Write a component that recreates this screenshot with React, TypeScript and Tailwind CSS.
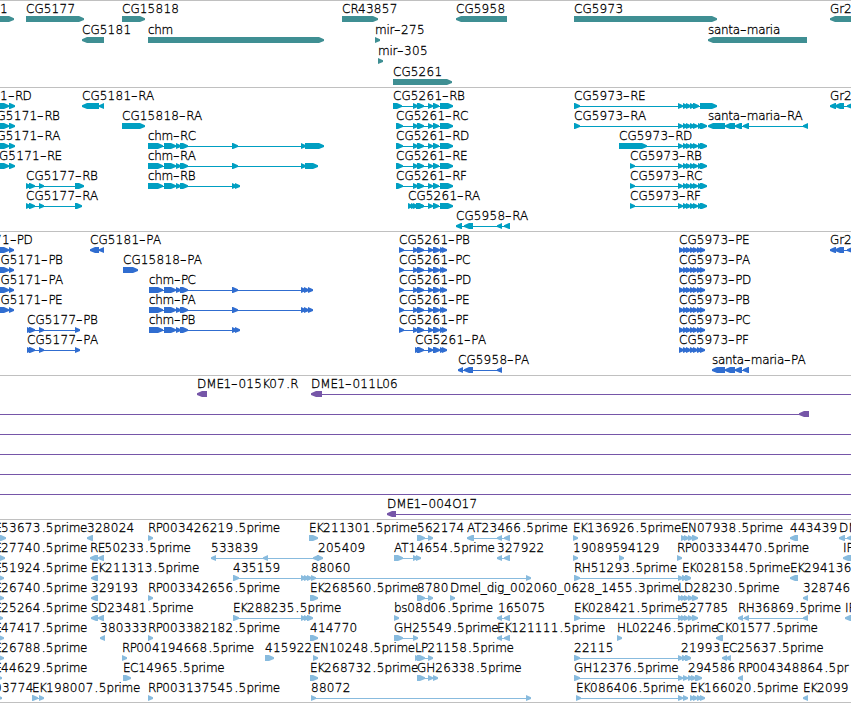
import React from 'react';

type Exon = [number, number];

interface Feature {
    label?: string;
    x: number; // label start
    exons: Exon[];
    reverse?: boolean;
}

interface Track {
    name: string;
    color: string;
    rowClass: string;
    className: string;
    rows: Feature[][];
}

const fwd = (label: string, x: number, ...exons: Exon[]): Feature => ({ label, x, exons });
const rev = (label: string, x: number, ...exons: Exon[]): Feature => ({ label, x, exons, reverse: true });

// exon groups that several transcripts share
const CHM: Exon[] = [[148, 163], [164, 176], [176, 181], [180, 188]];
const CHM_P: Exon[] = [[149, 163], [164, 176], [176, 181], [180, 188]];
const CHM_P_END: Exon[] = [[232, 238], [301, 306], [304, 309], [308, 313]];
const CG5261: Exon[] = [[413, 418], [417, 424], [428, 433], [433, 439], [440, 453]];
const CG5261_P: Exon[] = [[413, 418], [417, 424], [428, 433], [433, 440], [440, 445], [442, 447]];
const CG5973: Exon[] = [[678, 683], [683, 688], [686, 691], [690, 695], [693, 698], [698, 703], [700, 707]];
const CG5973_P: Exon[] = [[679, 684], [683, 688], [686, 691], [690, 695], [693, 698], [697, 702], [700, 705]];
const STACK4: Exon[] = [[681, 686], [684, 689], [688, 693], [692, 698]];
const STACK3: Exon[] = [[678, 683], [682, 687], [685, 691]];
const PAIR: Exon[] = [[497, 502], [504, 510]];

const genes: Feature[][] = [
    [
        fwd('1', 0, [-20, 14]),
        fwd('CG5177', 26, [26, 84]),
        fwd('CG15818', 122, [122, 145]),
        fwd('CR43857', 342, [342, 378]),
        rev('CG5958', 456, [456, 507]),
        fwd('CG5973', 574, [574, 717]),
        rev('Gr2', 830, [830, 870]),
    ],
    [
        rev('CG5181', 82, [82, 104]),
        fwd('chm', 148, [148, 324]),
        fwd('mir-275', 375, [375, 380]),
        rev('santa-maria', 708, [708, 807]),
    ],
    [fwd('mir-305', 378, [378, 383])],
    [fwd('CG5261', 393, [393, 452])],
];

const transcripts: Feature[][] = [
    [
        fwd('1-RD', 0, [-6, 9], [9, 15]),
        rev('CG5181-RA', 82, [82, 99], [99, 104]),
        fwd('CG5261-RB', 393, [393, 402], ...CG5261),
        fwd('CG5973-RE', 574, [574, 580], [678, 683], [683, 688], [686, 691], [690, 695], [693, 699], [700, 717]),
        rev('Gr2', 830, [830, 836], [835, 844], [847, 855]),
    ],
    [
        fwd('G5171-RB', -3.5, [-6, 9], [9, 15]),
        fwd('CG15818-RA', 122, [122, 145]),
        fwd('CG5261-RC', 396, [396, 403], ...CG5261),
        fwd('CG5973-RA', 574, [574, 580], ...CG5973),
        rev('santa-maria-RA', 708, [708, 725], [725, 735], [735, 742], [743, 749], [803, 808]),
    ],
    [
        fwd('G5171-RA', -3.5, [-6, 9], [9, 15]),
        fwd('chm-RC', 148, ...CHM, [232, 238], [301, 306], [305, 324]),
        fwd('CG5261-RD', 396, [396, 403], ...CG5261),
        fwd('CG5973-RD', 619, [619, 647], ...CG5973),
    ],
    [
        fwd('G5171-RE', -1, [-6, 9], [9, 15]),
        fwd('chm-RA', 148, ...CHM, [232, 238], [301, 306], [305, 318]),
        fwd('CG5261-RE', 396, [396, 403], ...CG5261),
        fwd('CG5973-RB', 630, [630, 635], ...CG5973),
    ],
    [
        fwd('CG5177-RB', 26, [26, 31], [29, 35], [39, 44], [75, 84]),
        fwd('chm-RB', 148, ...CHM, [232, 237], [235, 240]),
        fwd('CG5261-RF', 396, [396, 403], ...CG5261),
        fwd('CG5973-RC', 630, [630, 635], ...CG5973),
    ],
    [
        fwd('CG5177-RA', 26, [26, 31], [29, 35], [39, 44], [75, 82]),
        fwd('CG5261-RA', 408, [408, 413], [411, 416], [416, 424], ...CG5261),
        fwd('CG5973-RF', 630, [630, 635], ...CG5973),
    ],
    [rev('CG5958-RA', 456, [456, 462], [464, 473], ...PAIR)],
];

const proteins: Feature[][] = [
    [
        fwd('71-PD', -6, [-6, 9], [9, 14]),
        rev('CG5181-PA', 90, [90, 99], [99, 104]),
        fwd('CG5261-PB', 399, [399, 404], ...CG5261_P),
        fwd('CG5973-PE', 679, ...CG5973_P),
        rev('Gr2', 830, [830, 836], [835, 844], [847, 855]),
    ],
    [
        fwd('G5171-PB', 0.5, [-6, 9], [9, 14]),
        fwd('CG15818-PA', 123, [123, 138]),
        fwd('CG5261-PC', 399, [399, 404], ...CG5261_P),
        fwd('CG5973-PA', 679, ...CG5973_P),
    ],
    [
        fwd('G5171-PA', 0.5, [-6, 9], [9, 14]),
        fwd('chm-PC', 149, ...CHM_P, ...CHM_P_END),
        fwd('CG5261-PD', 399, [399, 404], ...CG5261_P),
        fwd('CG5973-PD', 679, ...CG5973_P),
    ],
    [
        fwd('G5171-PE', 0.5, [-6, 9], [9, 14]),
        fwd('chm-PA', 149, ...CHM_P, ...CHM_P_END),
        fwd('CG5261-PE', 399, [399, 404], ...CG5261_P),
        fwd('CG5973-PB', 679, ...CG5973_P),
    ],
    [
        fwd('CG5177-PB', 27, [27, 32], [29, 35], [39, 44], [75, 80]),
        fwd('chm-PB', 149, ...CHM_P, [232, 237], [235, 240]),
        fwd('CG5261-PF', 399, [399, 404], ...CG5261_P),
        fwd('CG5973-PC', 679, ...CG5973_P),
    ],
    [
        fwd('CG5177-PA', 27, [27, 32], [29, 35], [39, 44], [75, 80]),
        fwd('CG5261-PA', 415, [415, 420], [417, 424], [428, 433], [433, 440], [440, 445], [442, 447]),
        fwd('CG5973-PF', 679, ...CG5973_P),
    ],
    [
        rev('CG5958-PA', 458, [458, 463], [464, 473], [497, 502]),
        rev('santa-maria-PA', 712, [712, 725], [725, 735], [735, 742], [743, 749]),
    ],
];

// the clones run past both edges of the view
const bacs: Feature[][] = [
    [rev('DME1-015K07.R', 197, [197, 207]), rev('DME1-011L06', 311, [311, 322], [900, 910])],
    [rev('', 0, [-20, -10], [799, 809])],
    [rev('', 0, [-20, -10], [900, 910])],
    [rev('', 0, [-20, -10], [900, 910])],
    [rev('', 0, [-20, -10], [900, 910])],
    [rev('', 0, [-20, -10], [900, 910])],
    [rev('DME1-004O17', 387, [387, 396], [900, 910])],
];

const ests: Feature[][] = [
    [
        fwd('E53673.5prime', -5.8, [-6, 6]),
        rev('328024', 87, [87, 93]),
        fwd('RP003426219.5prime', 148, [148, 153]),
        fwd('EK211301.5prime', 309, [309, 318]),
        fwd('562174', 417, [417, 425], [428, 433]),
        rev('AT23466.5prime', 467, [467, 474], ...PAIR),
        fwd('EK136926.5prime', 573, [573, 578]),
        fwd('EN07938.5prime', 681, ...STACK4),
        rev('443439', 790, [790, 798]),
        rev('DM', 839, [839, 845], [847, 855]),
    ],
    [
        fwd('E27740.5prime', -5.8, [-6, 5]),
        rev('RE50233.5prime', 90, [90, 98], [98, 104]),
        rev('533839', 211, [211, 216], [263, 268], [313, 319]),
        fwd('205409', 318, [317, 323]),
        fwd('AT14654.5prime', 394, [394, 403], [413, 418], [416, 421]),
        rev('327922', 497, ...PAIR),
        fwd('190895', 573, [573, 578]),
        fwd('94129', 620, [619, 624]),
        fwd('RP003334470.5prime', 677, [677, 682]),
        rev('IP', 843, [843, 855]),
    ],
    [
        fwd('E51924.5prime', -5.8, [-6, 4]),
        rev('EK211313.5prime', 91, [91, 98]),
        fwd('435159', 233, [233, 239], [301, 306], [304, 309], [307, 312]),
        fwd('88060', 311, [311, 316], [526, 531]),
        fwd('RH51293.5prime', 574, [574, 580], ...STACK3),
        fwd('EK028158.5prime', 682, [682, 687], [685, 691]),
        rev('EK294136', 790, [790, 798]),
    ],
    [
        fwd('E26740.5prime', -5.8, [-6, 4]),
        rev('329193', 91, [91, 98]),
        fwd('RP003342656.5prime', 148, [148, 153]),
        fwd('EK268560.5prime', 310, [310, 318]),
        fwd('8780', 417, [417, 425], [428, 433]),
        fwd('Dmel_dig_002060_0628_1455.3prime', 450, [450, 455]),
        fwd('LD28230.5prime', 678, [678, 683], ...STACK4),
        rev('328746', 803, [803, 808]),
    ],
    [
        fwd('E25264.5prime', -5.8, [-6, 3]),
        rev('SD23481.5prime', 91, [91, 98], [98, 104]),
        fwd('EK288235.5prime', 233, [233, 239], [301, 306], [304, 309], [307, 313]),
        fwd('bs08d06.5prime', 394, [394, 399]),
        rev('165075', 498, ...PAIR),
        fwd('EK028421.5prime', 574, [574, 580], [678, 683]),
        fwd('527785', 681, ...STACK4),
        rev('RH36869.5prime', 738, [738, 743], [744, 749], [803, 808]),
        rev('IP', 845, [845, 855]),
    ],
    [
        fwd('E47417.5prime', -5.8, [-6, 4]),
        rev('380333', 100, [100, 105]),
        fwd('RP003382182.5prime', 148, [148, 153]),
        fwd('414770', 310, [310, 318]),
        fwd('GH25549.5prime', 394, [394, 403], [413, 418]),
        rev('EK121111.5prime', 497, ...PAIR),
        fwd('HL02246.5prime', 617, [617, 622]),
        rev('CK01577.5prime', 716, [716, 723]),
    ],
    [
        fwd('E26788.5prime', -5.8, [-6, 4]),
        fwd('RP004194668.5prime', 122, [122, 127]),
        fwd('415922', 265, [265, 274]),
        fwd('EN10248.5prime', 313, [313, 318]),
        fwd('LP21158.5prime', 415, [415, 420], [417, 425], [428, 433]),
        fwd('22115', 574, [574, 580], ...STACK3),
        fwd('21993', 681, [682, 687], [685, 691]),
        rev('EC25637.5prime', 722, [722, 727], [726, 731]),
    ],
    [
        fwd('E44629.5prime', -5.8, [-6, 2]),
        fwd('EC14965.5prime', 123, [123, 131]),
        fwd('EK268732.5prime', 310, [310, 318]),
        fwd('GH26338.5prime', 417, [417, 425], [428, 433], [433, 438]),
        fwd('GH12376.5prime', 574, [574, 580], [678, 683], [683, 688]),
        fwd('294586', 688, [688, 693], [691, 696], [695, 702]),
        rev('RP004348864.5pr', 738, [738, 743]),
    ],
    [
        fwd('03774', -6, [-6, 2]),
        fwd('EK198007.5prime', 32, [32, 38], [39, 44]),
        fwd('RP003137545.5prime', 148, [148, 153]),
        fwd('88072', 311, [311, 316], [526, 531]),
        fwd('EK086406.5prime', 576, [576, 581], [678, 683], [683, 688]),
        fwd('EK166020.5prime', 690, [690, 695], [693, 698], [697, 702], [700, 705]),
        rev('EK2099', 803, [803, 808]),
    ],
];

const tracks: Track[] = [
    { name: 'genes', color: '#3f8f93', rowClass: 'h-[21px]', className: '', rows: genes },
    { name: 'transcripts', color: '#009fc2', rowClass: 'h-5', className: 'pb-px', rows: transcripts },
    { name: 'proteins', color: '#306dd0', rowClass: 'h-5', className: 'pb-px', rows: proteins },
    { name: 'bacs', color: '#7656a8', rowClass: 'h-5', className: 'pb-px', rows: bacs },
    { name: 'ests', color: '#88bbde', rowClass: 'h-5', className: '', rows: ests },
];

// block with a pointed end, at most 5px of tip
function exonPoints([start, end]: Exon, reverse?: boolean) {
    const tip = Math.min(5, end - start);
    if (reverse) {
        return `${end},0 ${start + tip},0 ${start},2.2 ${start},3.9 ${start + tip},6 ${end},6`;
    }
    return `${start},0 ${end - tip},0 ${end},2.2 ${end},3.9 ${end - tip},6 ${start},6`;
}

function runClass(run: string) {
    if (run === '-') return 'inline-block w-[7px] origin-left scale-x-150';
    if (run === '.') return 'pl-px tracking-[0.3px]';
    if (/[0-9]/.test(run)) return 'tracking-[0.28px]';
    if (/[a-z]/.test(run)) return 'tracking-[-0.3px]';
    if (/[RPBEKFLS]/.test(run)) return 'tracking-[-0.7px]';
    return '';
}

function Label({ text, x }: { text: string; x: number }) {
    const runs = text.match(/-|\.|[0-9]+|[a-z]+|[RPBEKFLS]+|[^-.0-9a-zRPBEKFLS]+/g) ?? [];
    return (
        <span className="absolute -top-px whitespace-pre leading-[14px]" style={{ left: x }}>
            {runs.map((run, i) => (
                <span key={i} className={runClass(run)}>{run}</span>
            ))}
        </span>
    );
}

function Row({ features, color, rowClass }: { features: Feature[]; color: string; rowClass: string }) {
    return (
        <div className={`relative overflow-hidden ${rowClass}`}>
            <svg className="absolute left-0 top-[13px] h-1.5 w-[851px]" viewBox="0 0 851 6" fill={color}>
                {features.map((f, i) => {
                    const first = f.exons[0];
                    const last = f.exons[f.exons.length - 1];
                    return (
                        <g key={i}>
                            {f.exons.length > 1 && <rect x={first[0] + 1} y={3} width={last[1] - first[0] - 2} height={1} />}
                            {f.exons.map((exon, j) => (
                                <polygon key={j} points={exonPoints(exon, f.reverse)} />
                            ))}
                        </g>
                    );
                })}
            </svg>
            {features.map((f, i) => f.label && <Label key={i} text={f.label} x={f.x} />)}
        </div>
    );
}

export default function App() {
    return (
        <main className="h-[703px] w-[851px] overflow-hidden border-b border-[#c0c0c0] bg-white font-['DejaVu_Sans',sans-serif] text-[12px] font-extralight text-black [-webkit-text-stroke:0.3px_#000]">
            {tracks.map((track) => (
                <section key={track.name} className={`border-t border-[#c0c0c0] pt-0.5 ${track.className}`}>
                    {track.rows.map((features, i) => (
                        <Row key={i} features={features} color={track.color} rowClass={track.rowClass} />
                    ))}
                </section>
            ))}
        </main>
    );
}
